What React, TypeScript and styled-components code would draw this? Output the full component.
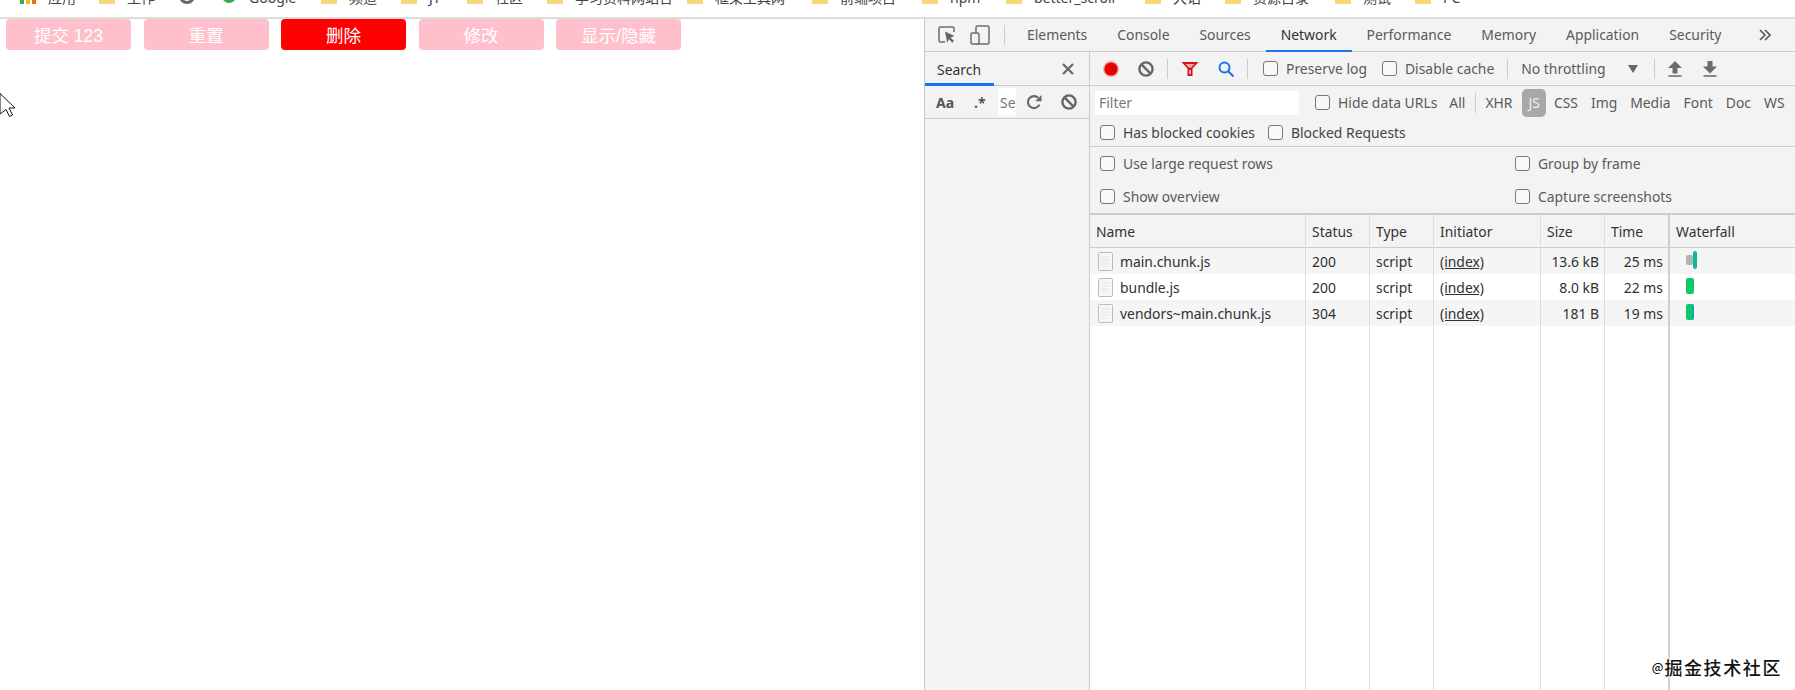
import React from 'react'
import styled, { createGlobalStyle } from 'styled-components'

const GlobalStyle = createGlobalStyle`
  html, body {
    margin: 0;
    padding: 0;
    background: #fff;
    overflow: hidden;
  }
  * {
    box-sizing: border-box;
  }
`

const Page = styled.div`
  position: relative;
  width: 1795px;
  height: 690px;
  display: flex;
  flex-direction: column;
  overflow: hidden;
  font-family: 'Noto Sans', 'Noto Sans CJK SC', sans-serif;
`

const BookmarkBar = styled.div`
  flex: 0 0 19px;
  display: flex;
  align-items: flex-end;
  padding: 0 0 13px 20px;
  border-bottom: 2px solid #dcdcdc;
  overflow: hidden;
`

const BookmarkItem = styled.div<{ $width: number }>`
  flex: 0 0 ${(p) => p.$width}px;
  display: flex;
  align-items: flex-end;
  gap: 12px;
  height: 18px;
  font-size: 14px;
  line-height: 18px;
  color: #444;
  white-space: nowrap;
`

const BookmarkIcon = styled.div`
  flex: 0 0 16px;
  height: 16px;
  line-height: 0;
`

const BookmarkLabel = styled.span`
  margin-bottom: -3px;
`

const Main = styled.div`
  flex: 1;
  min-height: 0;
  display: flex;
`

const Viewport = styled.div`
  flex: 0 0 924px;
  display: flex;
  align-items: flex-start;
  gap: 12.5px;
  padding-left: 6px;
`

const DemoButton = styled.button<{ $active?: boolean }>`
  flex: 0 0 125px;
  height: 31px;
  padding: 0;
  border: none;
  border-radius: 4px;
  color: #fff;
  font-family: 'Liberation Sans', 'Noto Sans CJK SC', sans-serif;
  font-size: 17.5px;
  background-color: ${(p) => (p.$active ? '#ff0000' : '#ffc0cb')};
`

const Devtools = styled.div`
  flex: 1;
  min-width: 0;
  display: flex;
  flex-direction: column;
  border-left: 1px solid #c8c8c8;
  background: #f3f3f3;
  font-size: 13.9px;
  color: #5a5a5a;
`

const TabBar = styled.div`
  flex: 0 0 33px;
  display: flex;
  align-items: stretch;
  padding-left: 13px;
  border-bottom: 1px solid #ccc;
`

const TabIcons = styled.div`
  display: flex;
  align-items: center;
  gap: 14px;
  padding-right: 14px;
`

const VerticalRule = styled.div`
  flex: 0 0 1px;
  align-self: center;
  height: 20px;
  background: #ccc;
`

const TabDivider = styled(VerticalRule)`
  margin-right: 7px;
`

const Tab = styled.div<{ $active?: boolean }>`
  display: flex;
  align-items: center;
  padding: 0 15px;
  margin-bottom: -1px;
  color: ${(p) => (p.$active ? '#333' : '#5a5a5a')};
  border-bottom: 2px solid ${(p) => (p.$active ? '#1a73e8' : 'transparent')};
`

const MoreTabs = styled.div`
  margin-left: auto;
  display: flex;
  align-items: center;
  padding-right: 24px;
`

const Body = styled.div`
  flex: 1;
  min-height: 0;
  display: flex;
`

const Sidebar = styled.div`
  flex: 0 0 165px;
  min-width: 0;
  border-right: 1px solid #ccc;
`

const SidebarHead = styled.div`
  height: 34px;
  display: flex;
  align-items: center;
  justify-content: space-between;
  border-bottom: 1px solid #ccc;
  padding-right: 15px;
`

const SidebarTab = styled.div`
  align-self: stretch;
  width: 69px;
  display: flex;
  align-items: center;
  padding: 3px 0 0 12px;
  margin-bottom: -1px;
  color: #333;
  border-bottom: 3px solid #1a73e8;
`

const SidebarTools = styled.div`
  height: 33px;
  display: flex;
  align-items: center;
  padding-left: 11px;
  border-bottom: 1px solid #ccc;
`

const CaseToggle = styled.span`
  width: 38px;
  font-weight: 700;
  font-size: 14px;
  color: #555;
`

const RegexToggle = styled.span`
  width: 24px;
  font-size: 14px;
  font-weight: 700;
  color: #555;
`

const SidebarInput = styled.input`
  width: 18px;
  height: 28px;
  padding: 0 0 0 2px;
  border: none;
  outline: none;
  background: #fff;
  font: inherit;
  margin-right: 10px;
  &::placeholder {
    color: #777;
  }
`

const SidebarToolIcon = styled.span`
  flex: 0 0 35px;
  line-height: 0;
  &:last-child {
    flex-basis: 16px;
  }
`

const Network = styled.div`
  flex: 1;
  min-width: 0;
  display: flex;
  flex-direction: column;
`

const Toolbar = styled.div`
  flex: 0 0 34px;
  display: flex;
  align-items: center;
  gap: 13px;
  padding-left: 13px;
  border-bottom: 1px solid #ccc;
`

const IconPair = styled.div<{ $gap?: number }>`
  display: flex;
  align-items: center;
  gap: ${(p) => p.$gap ?? 19}px;
  line-height: 0;
`

const Throttle = styled.div`
  flex: 0 0 120px;
  display: flex;
  align-items: center;
  justify-content: space-between;
  padding-right: 3px;
`

const FilterRow = styled.div`
  flex: 0 0 33px;
  display: flex;
  align-items: center;
  padding-left: 5px;
`

const FilterInput = styled.input`
  flex: 0 0 204px;
  height: 24px;
  margin-right: 16px;
  padding: 0 0 0 4px;
  border: none;
  outline: none;
  background: #fff;
  font: inherit;
  &::placeholder {
    color: #757575;
  }
`

const TypeList = styled.div`
  display: flex;
  align-items: center;
  gap: 13px;
  margin-left: 12px;
`

const TypeRule = styled(VerticalRule)`
  margin: 0 -4px 0 -3px;
`

const TypeItem = styled.span<{ $selected?: boolean }>`
  line-height: 28px;
  border-radius: 5px;
  ${(p) => p.$selected && 'background: #a8a8a8; color: #eee; padding: 0 6px; margin: 0 -5px 0 -3px;'}
`

const BlockedRow = styled.div`
  flex: 0 0 28px;
  display: flex;
  align-items: center;
  gap: 13px;
  padding-left: 10px;
  border-bottom: 1px solid #ccc;
  color: #444;
`

const Settings = styled.div`
  flex: 0 0 68px;
  display: grid;
  grid-template-columns: 415px 1fr;
  align-items: center;
  padding: 0 0 0 10px;
  border-bottom: 2px solid #ccc;
`

const Check = styled.label`
  display: inline-flex;
  align-items: center;
  gap: 8px;
  white-space: nowrap;
`

const ToolbarCheck = styled(Check)`
  margin-left: 2px;
`

const Box = styled.input.attrs({ type: 'checkbox' })`
  appearance: none;
  flex: 0 0 15px;
  width: 15px;
  height: 15px;
  margin: 0;
  border: 1px solid #777;
  border-radius: 3px;
  background: #f8f8f8;
`

const Table = styled.div`
  flex: 1;
  min-height: 0;
  display: flex;
  background: #fff;
  color: #303030;
`

const Column = styled.div<{ $width?: number; $heavy?: boolean }>`
  flex: ${(p) => (p.$width ? `0 0 ${p.$width}px` : '1')};
  min-width: 0;
  display: flex;
  flex-direction: column;
  border-right: ${(p) => (p.$heavy ? '2px solid #cfcfcf' : '1px solid #ddd')};
  &:last-child {
    border-right: none;
  }
`

const HeaderCell = styled.div`
  flex: 0 0 33px;
  display: flex;
  align-items: center;
  padding: 0 5px 0 6px;
  background: #f3f3f3;
  border-bottom: 1px solid #ccc;
  color: #333;
`

const Cell = styled.div<{ $striped: boolean; $right?: boolean; $link?: boolean }>`
  flex: 0 0 26px;
  display: flex;
  align-items: center;
  justify-content: ${(p) => (p.$right ? 'flex-end' : 'flex-start')};
  gap: 7px;
  padding: 0 5px 0 6px;
  white-space: nowrap;
  background: ${(p) => (p.$striped ? '#f5f5f5' : '#fff')};
  text-decoration: ${(p) => (p.$link ? 'underline' : 'none')};
`

const NameCell = styled(Cell)`
  gap: 7px;
  padding-left: 8px;
`

const WaterfallCell = styled(Cell)`
  gap: 0;
  padding: 0 0 2px 16px;
`

const Bar = styled.div<{ $w: number; $h: number; $color: string; $edge?: string }>`
  width: ${(p) => p.$w}px;
  height: ${(p) => p.$h}px;
  border-radius: 2px;
  background: ${(p) => p.$color};
  ${(p) => p.$edge && `border-right: 2px solid ${p.$edge};`}
`

const Watermark = styled.div`
  position: absolute;
  right: 13px;
  bottom: 11px;
  display: flex;
  align-items: center;
  gap: 1px;
  font-family: 'Noto Sans CJK SC', sans-serif;
  font-size: 18px;
  font-weight: 500;
  line-height: 24px;
  letter-spacing: 1.6px;
  color: #111;
  text-shadow: 0 0 2px #fff, 0 0 2px #fff, 0 0 3px #fff;
`

const WatermarkAt = styled.span`
  font-size: 12px;
  letter-spacing: 0;
`

const Pointer = styled.svg`
  position: absolute;
  left: 0;
  top: 93px;
`

const bookmarks = [
  { label: '应用', width: 79, kind: 'apps' },
  { label: '工作', width: 80, kind: 'folder' },
  { label: '', width: 42, kind: 'gray' },
  { label: 'Google', width: 100, kind: 'google' },
  { label: '频道', width: 80, kind: 'folder' },
  { label: 'JY', width: 66, kind: 'folder' },
  { label: '社区', width: 80, kind: 'folder' },
  { label: '学习资料网站合', width: 140, kind: 'folder' },
  { label: '框架工具网', width: 125, kind: 'folder' },
  { label: '前端项目', width: 110, kind: 'folder' },
  { label: 'npm', width: 84, kind: 'folder' },
  { label: 'better_scroll', width: 139, kind: 'folder' },
  { label: '大话', width: 80, kind: 'folder' },
  { label: '资源目录', width: 110, kind: 'folder' },
  { label: '测试', width: 80, kind: 'folder' },
  { label: 'PC', width: 60, kind: 'folder' },
]

const buttons = ['提交 123', '重置', '删除', '修改', '显示/隐藏']
const tabs = ['Elements', 'Console', 'Sources', 'Network', 'Performance', 'Memory', 'Application', 'Security']
const types = ['XHR', 'JS', 'CSS', 'Img', 'Media', 'Font', 'Doc', 'WS']

const rows = [
  { name: 'main.chunk.js', status: '200', size: '13.6 kB', time: '25 ms' },
  { name: 'bundle.js', status: '200', size: '8.0 kB', time: '22 ms' },
  { name: 'vendors~main.chunk.js', status: '304', size: '181 B', time: '19 ms' },
]

function BookmarkGlyph({ kind }: { kind: string }) {
  if (kind === 'folder') {
    return (
      <svg width="16" height="16" viewBox="0 0 16 16">
        <path d="M0 3h6l2 2h8v11H0z" fill="#f8d775" />
      </svg>
    )
  }
  if (kind === 'apps') {
    return (
      <svg width="16" height="16" viewBox="0 0 16 16">
        <rect x="0" y="11" width="4" height="5" fill="#34a853" />
        <rect x="6" y="11" width="4" height="5" fill="#fbbc05" />
        <rect x="12" y="11" width="4" height="5" fill="#ea6c1e" />
      </svg>
    )
  }
  return (
    <svg width="16" height="16" viewBox="0 0 16 16">
      {kind === 'gray' ? (
        <circle cx="8" cy="8" r="6.5" fill="#fff" stroke="#666" strokeWidth="3" />
      ) : (
        <circle cx="8" cy="8" r="7" fill="#34a853" />
      )}
    </svg>
  )
}

function InspectIcon() {
  return (
    <svg width="18" height="18" viewBox="0 0 18 18" fill="none">
      <path d="M7 16H2.500A1.500 1.500 0 0 1 1 14.500v-12A1.500 1.500 0 0 1 2.500 1h12A1.500 1.500 0 0 1 16 2.500V6" stroke="#6e6e6e" strokeWidth="1.5" />
      <path d="M7 5.500l9.500 4.600-4 1.400 3.400 3.600-1.600 1.600-3.400-3.600-1.700 3.800z" fill="#5f6368" />
    </svg>
  )
}

function DeviceIcon() {
  return (
    <svg width="20" height="20" viewBox="0 0 20 20" fill="none" stroke="#6e6e6e" strokeWidth="1.5">
      <rect x="6" y="1" width="13" height="18" rx="1.5" />
      <rect x="1" y="8" width="8" height="11" rx="1.5" fill="#f3f3f3" />
    </svg>
  )
}

function BlockIcon() {
  return (
    <svg width="16" height="16" viewBox="0 0 16 16" fill="none" stroke="#666" strokeWidth="2.4">
      <circle cx="8" cy="8" r="6.6" />
      <path d="M3.400 3.400l9.200 9.200" />
    </svg>
  )
}

function ReloadIcon() {
  return (
    <svg width="16" height="16" viewBox="0 0 16 16" fill="none">
      <path d="M13.400 10.600A6 6 0 1 1 12.200 3.800" stroke="#666" strokeWidth="2.2" />
      <path d="M15.500 1v6.200H9.300z" fill="#666" />
    </svg>
  )
}

function RecordIcon() {
  return (
    <svg width="16" height="16" viewBox="0 0 16 16">
      <circle cx="8" cy="8" r="8" fill="#f4a9a9" />
      <circle cx="8" cy="8" r="6.600" fill="#e60000" />
    </svg>
  )
}

function FilterIcon() {
  return (
    <svg width="18" height="16" viewBox="0 0 18 16">
      <path d="M0.500 1h17l-6 6.500V15L6.500 15V7.500z" fill="#d4121a" />
      <path d="M4.500 3h9l-3.500 3.800H8z" fill="#f3a6a6" />
      <path d="M8 9h2v4H8z" fill="#f3a6a6" />
    </svg>
  )
}

function SearchIcon() {
  return (
    <svg width="16" height="16" viewBox="0 0 16 16" fill="none" stroke="#1a73e8" strokeWidth="2">
      <circle cx="6.500" cy="6.500" r="5" />
      <path d="M10.200 10.200L15.500 15.500" />
    </svg>
  )
}

function CloseIcon() {
  return (
    <svg width="12" height="12" viewBox="0 0 12 12" stroke="#666" strokeWidth="2.2">
      <path d="M1 1l10 10M11 1L1 11" />
    </svg>
  )
}

function TransferIcon({ down }: { down?: boolean }) {
  return (
    <svg width="14" height="16" viewBox="0 0 14 16" fill="#6b6b6b">
      <path d={down ? 'M4.500 0h5v5.500H14L7 12.500 0 5.500h4.500z' : 'M7 0l7 7H9.500v5.500h-5V7H0z'} />
      <rect x="0.500" y="14" width="13" height="2" fill="#8a8a8a" />
    </svg>
  )
}

function ChevronsIcon() {
  return (
    <svg width="12" height="12" viewBox="0 0 12 12" fill="none" stroke="#555" strokeWidth="1.6">
      <path d="M1 1l5 5-5 5M6 1l5 5-5 5" />
    </svg>
  )
}

function FileIcon() {
  return (
    <svg width="15" height="19" viewBox="0 0 15 19" fill="#fff" stroke="#bbb">
      <rect x="0.500" y="0.500" width="14" height="18" rx="1" fill="#f6f6f6" />
      <path d="M3 5h8M3 8h8M3 11h8M3 14h6" stroke="#e4e4e4" />
    </svg>
  )
}

export default function App() {
  return (
    <Page>
      <GlobalStyle />
      <BookmarkBar>
        {bookmarks.map((b, i) => (
          <BookmarkItem key={i} $width={b.width}>
            <BookmarkIcon>
              <BookmarkGlyph kind={b.kind} />
            </BookmarkIcon>
            <BookmarkLabel>{b.label}</BookmarkLabel>
          </BookmarkItem>
        ))}
      </BookmarkBar>

      <Main>
        <Viewport>
          {buttons.map((label, i) => (
            <DemoButton key={label} $active={i === 2}>
              {label}
            </DemoButton>
          ))}
        </Viewport>

        <Devtools>
          <TabBar>
            <TabIcons>
              <InspectIcon />
              <DeviceIcon />
            </TabIcons>
            <TabDivider />
            {tabs.map((t) => (
              <Tab key={t} $active={t === 'Network'}>
                {t}
              </Tab>
            ))}
            <MoreTabs>
              <ChevronsIcon />
            </MoreTabs>
          </TabBar>

          <Body>
            <Sidebar>
              <SidebarHead>
                <SidebarTab>Search</SidebarTab>
                <CloseIcon />
              </SidebarHead>
              <SidebarTools>
                <CaseToggle>Aa</CaseToggle>
                <RegexToggle>.*</RegexToggle>
                <SidebarInput placeholder="Search" />
                <SidebarToolIcon>
                  <ReloadIcon />
                </SidebarToolIcon>
                <SidebarToolIcon>
                  <BlockIcon />
                </SidebarToolIcon>
              </SidebarTools>
            </Sidebar>

            <Network>
              <Toolbar>
                <IconPair>
                  <RecordIcon />
                  <BlockIcon />
                </IconPair>
                <VerticalRule />
                <IconPair>
                  <FilterIcon />
                  <SearchIcon />
                </IconPair>
                <VerticalRule />
                <ToolbarCheck>
                  <Box />
                  Preserve log
                </ToolbarCheck>
                <ToolbarCheck>
                  <Box />
                  Disable cache
                </ToolbarCheck>
                <VerticalRule />
                <Throttle>
                  No throttling
                  <svg width="10" height="8" viewBox="0 0 10 8" fill="#666">
                    <path d="M0 0h10L5 8z" />
                  </svg>
                </Throttle>
                <VerticalRule />
                <IconPair $gap={21}>
                  <TransferIcon />
                  <TransferIcon down />
                </IconPair>
              </Toolbar>

              <FilterRow>
                <FilterInput placeholder="Filter" />
                <Check>
                  <Box />
                  Hide data URLs
                </Check>
                <TypeList>
                  <span>All</span>
                  <TypeRule />
                  {types.map((t) => (
                    <TypeItem key={t} $selected={t === 'JS'}>
                      {t}
                    </TypeItem>
                  ))}
                </TypeList>
              </FilterRow>

              <BlockedRow>
                <Check>
                  <Box />
                  Has blocked cookies
                </Check>
                <Check>
                  <Box />
                  Blocked Requests
                </Check>
              </BlockedRow>

              <Settings>
                <Check>
                  <Box />
                  Use large request rows
                </Check>
                <Check>
                  <Box />
                  Group by frame
                </Check>
                <Check>
                  <Box />
                  Show overview
                </Check>
                <Check>
                  <Box />
                  Capture screenshots
                </Check>
              </Settings>

              <Table>
                <Column $width={216}>
                  <HeaderCell>Name</HeaderCell>
                  {rows.map((r, i) => (
                    <NameCell key={r.name} $striped={i !== 1}>
                      <FileIcon />
                      {r.name}
                    </NameCell>
                  ))}
                </Column>
                <Column $width={64}>
                  <HeaderCell>Status</HeaderCell>
                  {rows.map((r, i) => (
                    <Cell key={r.name} $striped={i !== 1}>
                      {r.status}
                    </Cell>
                  ))}
                </Column>
                <Column $width={64}>
                  <HeaderCell>Type</HeaderCell>
                  {rows.map((r, i) => (
                    <Cell key={r.name} $striped={i !== 1}>
                      script
                    </Cell>
                  ))}
                </Column>
                <Column $width={107}>
                  <HeaderCell>Initiator</HeaderCell>
                  {rows.map((r, i) => (
                    <Cell key={r.name} $striped={i !== 1} $link>
                      (index)
                    </Cell>
                  ))}
                </Column>
                <Column $width={64}>
                  <HeaderCell>Size</HeaderCell>
                  {rows.map((r, i) => (
                    <Cell key={r.name} $striped={i !== 1} $right>
                      {r.size}
                    </Cell>
                  ))}
                </Column>
                <Column $width={65} $heavy>
                  <HeaderCell>Time</HeaderCell>
                  {rows.map((r, i) => (
                    <Cell key={r.name} $striped={i !== 1} $right>
                      {r.time}
                    </Cell>
                  ))}
                </Column>
                <Column>
                  <HeaderCell>Waterfall</HeaderCell>
                  <WaterfallCell $striped>
                    <Bar $w={7} $h={10} $color="#b3b3b3" />
                    <Bar $w={4} $h={18} $color="#0cb8a4" />
                  </WaterfallCell>
                  <WaterfallCell $striped={false}>
                    <Bar $w={8} $h={16} $color="#10c76a" />
                  </WaterfallCell>
                  <WaterfallCell $striped>
                    <Bar $w={8} $h={16} $color="#10c76a" $edge="#1a9fc0" />
                  </WaterfallCell>
                </Column>
              </Table>
            </Network>
          </Body>
        </Devtools>
      </Main>

      <Pointer width="16" height="24" viewBox="0 0 16 24" fill="#fff" stroke="#111" strokeWidth="1">
        <path d="M0 0.500L15 15H9l3.500 7-3 1.500L6 16.500 0 21z" />
      </Pointer>
      <Watermark>
        <WatermarkAt>@</WatermarkAt>
        掘金技术社区
      </Watermark>
    </Page>
  )
}
